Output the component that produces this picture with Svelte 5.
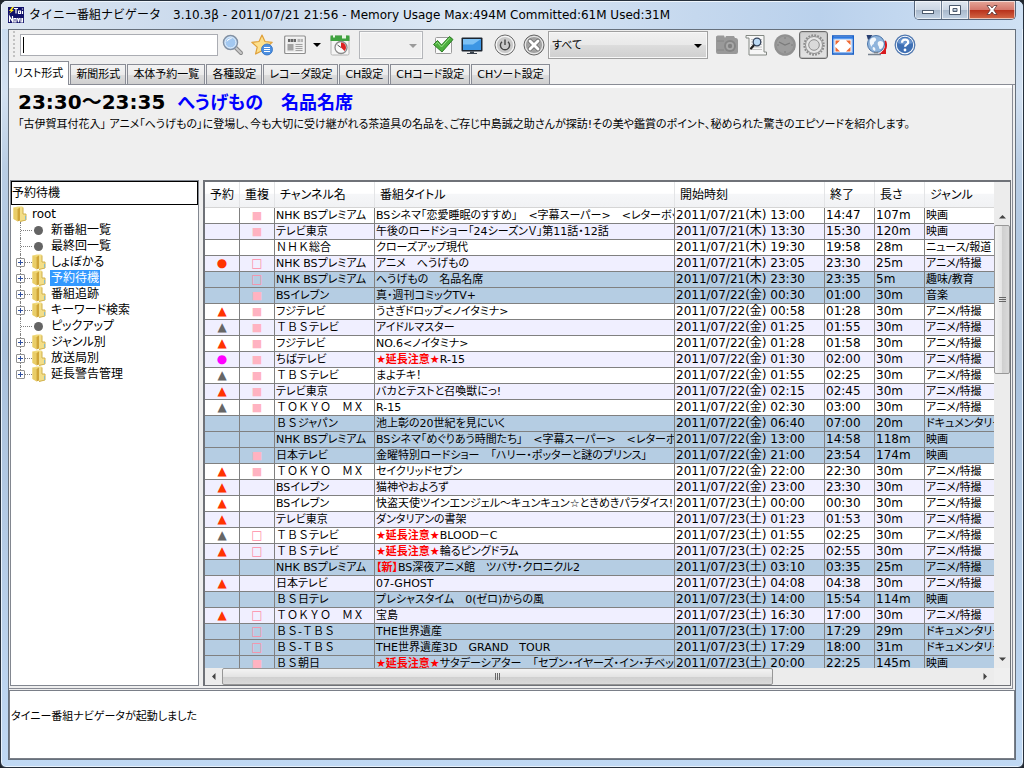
<script>
  let keyword = '';
  let genre = 'すべて';
  let activeTab = 'リスト形式';
  let selectedNode = '予約待機';

  const tabs = [
    'リスト形式',
    '新聞形式',
    '本体予約一覧',
    '各種設定',
    'レコーダ設定',
    'CH設定',
    'CHコード設定',
    'CHソート設定'
  ];

  const tree = [
    { label: '新番組一覧', leaf: true },
    { label: '最終回一覧', leaf: true },
    { label: 'しょぼかる' },
    { label: '予約待機' },
    { label: '番組追跡' },
    { label: 'キーワード検索' },
    { label: 'ピックアップ', leaf: true },
    { label: 'ジャンル別' },
    { label: '放送局別' },
    { label: '延長警告管理' }
  ];

  const columns = ['予約', '重複', 'チャンネル名', '番組タイトル', '開始時刻', '終了', '長さ', 'ジャンル'];

  const marks = {
    o: ['●', 'red'],
    m: ['●', 'magenta'],
    r: ['▲', 'red'],
    g: ['▲', 'gray']
  };

  const WARN = '★延長注意★';

  // mark, overlap, channel, flag, title, start, end, length, genre, passed
  const programs = [
    ['', '■', 'NHK BSプレミアム', '', 'BSシネマ「恋愛睡眠のすすめ」　<字幕スーパー>　<レターボックス', '2011/07/21(木) 13:00', '14:47', '107m', '映画', 0],
    ['', '■', 'テレビ東京', '', '午後のロードショー「24シーズンＶ」第11話・12話', '2011/07/21(木) 13:30', '15:30', '120m', '映画', 0],
    ['', '', 'ＮＨＫ総合', '', 'クローズアップ現代', '2011/07/21(木) 19:30', '19:58', '28m', 'ニュース/報道', 0],
    ['o', '□', 'NHK BSプレミアム', '', 'アニメ　へうげもの', '2011/07/21(木) 23:05', '23:30', '25m', 'アニメ/特撮', 0],
    ['', '□', 'NHK BSプレミアム', '', 'へうげもの　名品名席', '2011/07/21(木) 23:30', '23:35', '5m', '趣味/教育', 1],
    ['', '■', 'BSイレブン', '', '真・週刊コミックTV+', '2011/07/22(金) 00:30', '01:00', '30m', '音楽', 1],
    ['r', '■', 'フジテレビ', '', 'うさぎドロップ<ノイタミナ>', '2011/07/22(金) 00:58', '01:28', '30m', 'アニメ/特撮', 0],
    ['g', '■', 'ＴＢＳテレビ', '', 'アイドルマスター', '2011/07/22(金) 01:25', '01:55', '30m', 'アニメ/特撮', 0],
    ['r', '■', 'フジテレビ', '', 'NO.6<ノイタミナ>', '2011/07/22(金) 01:28', '01:58', '30m', 'アニメ/特撮', 0],
    ['m', '■', 'ちばテレビ', WARN, 'R-15', '2011/07/22(金) 01:30', '02:00', '30m', 'アニメ/特撮', 0],
    ['g', '■', 'ＴＢＳテレビ', '', 'まよチキ！', '2011/07/22(金) 01:55', '02:25', '30m', 'アニメ/特撮', 0],
    ['r', '■', 'テレビ東京', '', 'バカとテストと召喚獣にっ!', '2011/07/22(金) 02:15', '02:45', '30m', 'アニメ/特撮', 0],
    ['g', '■', 'ＴＯＫＹＯ　ＭＸ', '', 'R-15', '2011/07/22(金) 02:30', '03:00', '30m', 'アニメ/特撮', 0],
    ['', '', 'ＢＳジャパン', '', '池上彰の20世紀を見にいく', '2011/07/22(金) 06:40', '07:00', '20m', 'ドキュメンタリー', 1],
    ['', '', 'NHK BSプレミアム', '', 'BSシネマ「めぐりあう時間たち」　<字幕スーパー>　<レターボックス', '2011/07/22(金) 13:00', '14:58', '118m', '映画', 1],
    ['', '■', '日本テレビ', '', '金曜特別ロードショー　「ハリー・ポッターと謎のプリンス」', '2011/07/22(金) 21:00', '23:54', '174m', '映画', 1],
    ['r', '■', 'ＴＯＫＹＯ　ＭＸ', '', 'セイクリッドセブン', '2011/07/22(金) 22:00', '22:30', '30m', 'アニメ/特撮', 0],
    ['r', '', 'BSイレブン', '', '猫神やおよろず', '2011/07/22(金) 23:00', '23:30', '30m', 'アニメ/特撮', 0],
    ['r', '', 'BSイレブン', '', '快盗天使ツインエンジェル～キュンキュン☆ときめきパラダイス!!～', '2011/07/23(土) 00:00', '00:30', '30m', 'アニメ/特撮', 0],
    ['r', '', 'テレビ東京', '', 'ダンタリアンの書架', '2011/07/23(土) 01:23', '01:53', '30m', 'アニメ/特撮', 0],
    ['g', '□', 'ＴＢＳテレビ', WARN, 'BLOOD－C', '2011/07/23(土) 01:55', '02:25', '30m', 'アニメ/特撮', 0],
    ['r', '□', 'ＴＢＳテレビ', WARN, '輪るピングドラム', '2011/07/23(土) 02:25', '02:55', '30m', 'アニメ/特撮', 0],
    ['', '', 'NHK BSプレミアム', '【新】', 'BS深夜アニメ館　ツバサ・クロニクル2', '2011/07/23(土) 03:10', '03:35', '25m', 'アニメ/特撮', 1],
    ['r', '', '日本テレビ', '', '07-GHOST', '2011/07/23(土) 04:08', '04:38', '30m', 'アニメ/特撮', 0],
    ['', '', 'ＢＳ日テレ', '', 'プレシャスタイム　0(ゼロ)からの風', '2011/07/23(土) 14:00', '15:54', '114m', '映画', 1],
    ['r', '□', 'ＴＯＫＹＯ　ＭＸ', '', '宝島', '2011/07/23(土) 16:30', '17:00', '30m', 'アニメ/特撮', 0],
    ['', '□', 'ＢＳ-ＴＢＳ', '', 'THE世界遺産', '2011/07/23(土) 17:00', '17:29', '29m', 'ドキュメンタリー', 1],
    ['', '□', 'ＢＳ-ＴＢＳ', '', 'THE世界遺産3D　GRAND　TOUR', '2011/07/23(土) 17:29', '18:00', '31m', 'ドキュメンタリー', 1],
    ['', '■', 'ＢＳ朝日', WARN, 'サタデーシアター　「セブン・イヤーズ・イン・チベット', '2011/07/23(土) 20:00', '22:25', '145m', '映画', 1]
  ];

  // Full-width letters keep their own advance, the kana after them is set tighter
  function splitChannel(name) {
    const m = name.match(/^([Ａ-Ｚ　-]*)(.*)$/);
    return [m[1], m[2]];
  }
</script>

{#snippet folder()}
  <svg class="folder" viewBox="0 0 14 16" aria-hidden="true">
    <path d="M.5 1.500L5 .5h4.500v14H5L.5 13z" fill="#f0d978" />
    <path d="M.5 1.500L4.500 3v12.500L.5 13z" fill="#e9cd68" />
    <path d="M4.500 3L7 1.500v13l-2.500 1z" fill="#cfa537" />
    <path d="M7 1h3v7h3v6l-6 1.500z" fill="#f3de88" />
    <path d="M10 1.500V8h3v6l-6 1.500" fill="none" stroke="#d0b04a" />
    <path d="M12.500 10v3.500" stroke="#7dbbd4" stroke-width=".9" />
  </svg>
{/snippet}

<div class="window">
  <header class="title-bar">
    <svg class="app-icon" viewBox="0 0 16 16" aria-hidden="true">
      <rect width="16" height="16" fill="#10106a" />
      <path d="M4 0L1 4h2L1 7l5-4H4l2-3z" fill="#ffe81a" />
      <path d="M6 1.500h4M8 1.500v5M10.500 4h2v2.500h-2zM14.500 4v3M14.500 1.500v1" stroke="#fff" stroke-width="1.200" fill="none" />
      <path d="M1.500 15V9.500l3 5V9M6 11.500h2V15H6zM9.500 11l1 4 1-4M13 11v4h1.500v-4" stroke="#fff" stroke-width="1.200" fill="none" />
    </svg>
    <h1>タイニー番組ナビゲータ　3.10.3β - 2011/07/21 21:56 - Memory Usage Max:494M Committed:61M Used:31M</h1>
    <div class="window-controls">
      <button aria-label="最小化">
        <svg viewBox="0 0 14 12"><rect x="1.500" y="6.500" width="11" height="3" fill="#fff" stroke="#4c5a6d" /></svg>
      </button>
      <button aria-label="最大化">
        <svg viewBox="0 0 14 12"><path d="M1.500 1.500h11v9h-11zM5 4.500v3h4v-3z" fill="#fff" fill-rule="evenodd" stroke="#4c5a6d" /></svg>
      </button>
      <button class="close" aria-label="閉じる">
        <svg viewBox="0 0 14 12"><path d="M2 1.500h3L7 4l2-2.500h3L8.800 6l3.200 4.500H9L7 8l-2 2.500H2L5.200 6z" fill="#fff" stroke="#5b3434" stroke-width=".8" /></svg>
      </button>
    </div>
  </header>

  <div class="client">
    <div class="toolbar">
      <span class="grip"></span>
      <div class="search-box">
        <span class="caret"></span>
        <input type="text" aria-label="キーワード" bind:value={keyword} />
      </div>
      <button class="tool" aria-label="検索">
        <svg viewBox="0 0 22 22">
          <path d="M13 13l6 6" stroke="#8a8a8a" stroke-width="4" stroke-linecap="round" />
          <path d="M13 13l6 6" stroke="#c9c9c9" stroke-width="2" stroke-linecap="round" />
          <circle cx="8.500" cy="8.500" r="7" fill="#a3c8f0" stroke="#8391a3" stroke-width="1.500" />
          <circle cx="8.500" cy="8.500" r="5.500" fill="none" stroke="#e8f2fc" />
          <path d="M4.500 8a4.500 4.500 0 0 1 6-3.500C8 5 6 6 4.500 8z" fill="#fff" />
        </svg>
      </button>
      <button class="tool" aria-label="キーワードに追加">
        <svg viewBox="0 0 22 22">
          <path d="M11 1l3 6.500 7.200.8-5.400 4.800L17.400 20 11 16.800 4.600 20l1.600-6.900L.8 8.300 8 7.500z" fill="#fde08c" stroke="#dfa03a" stroke-width="1.200" stroke-linejoin="round" />
          <circle cx="16" cy="15.500" r="5.500" fill="#4c8fe0" stroke="#2f6fc2" stroke-width=".8" />
          <path d="M13 13.500h6M13 15.500h6M13 17.500h6" stroke="#fff" stroke-width="1.100" />
        </svg>
      </button>
      <button class="tool spaced" aria-label="表示形式">
        <svg viewBox="0 0 22 22">
          <rect x=".7" y="2" width="20.600" height="17.500" rx="1" fill="#fbfbfb" stroke="#8d8d8d" stroke-width="1.200" />
          <rect x="2.500" y="3.500" width="17" height="14.500" fill="#ececec" />
          <path d="M4 6.500h8" stroke="#666" stroke-width="3" stroke-dasharray="2.500 .5" />
          <path d="M13.500 6.500h5.500" stroke="#b4b4b4" stroke-width="3" stroke-dasharray="2.500 .5" />
          <rect x="3.500" y="10" width="6" height="6.500" fill="#a3a3a3" />
          <path d="M11.500 10.500h7M11.500 12.500h7M11.500 14.500h7M11.500 16.500h7" stroke="#999" stroke-width=".9" />
        </svg>
      </button>
      <button class="drop" aria-label="表示形式を選ぶ">
        <svg viewBox="0 0 8 4"><path d="M0 0h8L4 4z" fill="#000" /></svg>
      </button>
      <button class="tool" aria-label="日付指定">
        <svg viewBox="0 0 22 22">
          <rect x="2" y="2" width="18" height="19" rx="1.500" fill="#f5f5f5" stroke="#b4b4b4" />
          <path d="M1.500 1.500h19V7h-19z" fill="#3fa23f" />
          <path d="M13 .5h4v4h-4zM4 .5h2v3H4z" fill="#e8f5e4" />
          <circle cx="12" cy="13.500" r="6" fill="#fafafa" stroke="#8b8b8b" stroke-width="1.300" />
          <path d="M12 13.500V8.500A5 5 0 0 1 15.500 17z" fill="#dc2222" />
          <path d="M12 13.500L8.500 11" stroke="#555" />
        </svg>
      </button>
      <label class="combo small">
        <select aria-label="日付" disabled><option></option></select>
      </label>
      <button class="tool" aria-label="実行">
        <svg viewBox="0 0 22 22">
          <rect x="3.500" y="3.500" width="16" height="16" rx="1" fill="#fafafa" stroke="#9b9b9b" />
          <path d="M1.500 10.500l4-4 4 4.500L17.500 2.500 21 5.500 10 18z" fill="#4caf3d" stroke="#2b7c23" />
          <path d="M3.500 10l2-1.500 4 4.500 8-9" fill="none" stroke="#9be28c" />
        </svg>
      </button>
      <button class="tool" aria-label="画面">
        <svg viewBox="0 0 22 22">
          <rect x=".5" y="3.500" width="21" height="14" rx="1" fill="#1c2530" />
          <rect x="2" y="5" width="18" height="11" fill="#3c96e4" />
          <path d="M2 5h18l-8 5.500H2z" fill="#7cc1f5" />
          <path d="M9 17.500h4V19h3v1H6v-1h3z" fill="#39424d" />
        </svg>
      </button>
      <button class="tool spaced" aria-label="電源">
        <svg viewBox="0 0 22 22">
          <circle cx="11" cy="11" r="10" fill="#c9c9c9" stroke="#6b6b6b" />
          <circle cx="11" cy="11" r="8.700" fill="none" stroke="#f5f5f5" stroke-width="1.200" />
          <path d="M8 7.700a4.600 4.600 0 1 0 6 0M11 5.500v5.500" fill="none" stroke="#444" stroke-width="1.400" />
        </svg>
      </button>
      <button class="tool" aria-label="中止">
        <svg viewBox="0 0 22 22">
          <circle cx="11" cy="11" r="10" fill="#a2a2a2" stroke="#666" />
          <circle cx="11" cy="11" r="8.700" fill="none" stroke="#e6e6e6" stroke-width="1.200" />
          <path d="M7 7l8 8M15 7l-8 8" stroke="#666" stroke-width="4.500" stroke-linecap="round" />
          <path d="M7 7l8 8M15 7l-8 8" stroke="#fff" stroke-width="3" stroke-linecap="round" />
        </svg>
      </button>
      <label class="combo">
        <select aria-label="ジャンル" bind:value={genre}>
          <option>すべて</option>
          <option>アニメ/特撮</option>
          <option>映画</option>
        </select>
      </label>
      <button class="tool spaced" aria-label="スナップショット">
        <svg viewBox="0 0 22 22">
          <path d="M2 1.500h6L9 4l1-2h8l1 2a2.500 2.500 0 0 1 3 2v12a2 2 0 0 1-2 2H2a2 2 0 0 1-2-2V4a2 2 0 0 1 2-2.500z" fill="#999" />
          <path d="M1 7h7M1 16h7" stroke="#868686" />
          <circle cx="14" cy="12" r="6" fill="#858585" />
          <circle cx="14" cy="12" r="4" fill="#a8a8a8" />
          <circle cx="14" cy="12" r="2.200" fill="#808080" />
        </svg>
      </button>
      <button class="tool" aria-label="ログ">
        <svg viewBox="0 0 22 22">
          <path d="M1 1.500h18V18h2.500v3H4V4H1z" fill="#f7f7f7" stroke="#838883" />
          <path d="M6 5.500h11M6 8h11M6 10.500h11M6 13h11M6 15.500h11" stroke="#c4c4c4" />
          <path d="M9.500 10.500L6 14.500" stroke="#222" stroke-width="2.200" stroke-linecap="round" />
          <circle cx="12" cy="8" r="3.800" fill="#bcdaf5" stroke="#35445c" stroke-width="1.300" />
        </svg>
      </button>
      <button class="tool" aria-label="タイマー">
        <svg viewBox="0 0 22 22">
          <circle cx="11" cy="11" r="10.800" fill="#919191" />
          <circle cx="11" cy="11" r="8.500" fill="#9d9d9d" />
          <path d="M5 8l6 3 5-2" fill="none" stroke="#7a7a7a" stroke-width="1.300" />
          <path d="M11 3v2M11 17v2M3 11h2M17 11h2" stroke="#7f7f7f" />
        </svg>
      </button>
      <button class="tool pressed" aria-label="設定">
        <svg viewBox="0 0 22 22">
          <circle cx="11" cy="11" r="9.700" fill="none" stroke="#8c8c8c" stroke-width="2" stroke-dasharray="1.800 1.247" />
          <circle cx="11" cy="11" r="8.500" fill="#e6e6e6" stroke="#8f8f8f" />
          <circle cx="11" cy="11" r="5.300" fill="#dadada" stroke="#8f8f8f" />
        </svg>
      </button>
      <button class="tool" aria-label="全画面">
        <svg viewBox="0 0 22 22">
          <rect x=".8" y="2" width="20.400" height="18" fill="#fff" stroke="#1c62c8" stroke-width="1.600" />
          <path d="M1 3h20v2H1z" fill="#2d7be4" />
          <rect x="2" y="5" width="18" height="13.500" fill="none" stroke="#8db9f2" />
          <path d="M3.500 6.500h4.500l-4.500 4.500zM18.500 6.500H14l4.500 4.500zM3.500 17.500h4.500L3.500 13zM18.500 17.500H14l4.500-4.500z" fill="#ee6a35" />
        </svg>
      </button>
      <button class="tool spaced" aria-label="番組情報取得">
        <svg viewBox="0 0 22 22">
          <path d="M20 7c2.500 5 0 10-3 12" fill="none" stroke="#d81a1f" stroke-width="2" />
          <path d="M14 20h7v-5z" fill="#d81a1f" />
          <circle cx="11" cy="10" r="8.500" fill="#8fb4dc" stroke="#4b74a8" />
          <path d="M5 6c2-3 5-3 6-1s-2 2-2 4-2 1-2 3-3-2-2-6zM13 8c2-2 5-1 5.500 1s-1 6-3 6-1-2-2-3-1-3-.5-4zM8 13c2 0 3 2 2 4-2-1-3-2-2-4z" fill="#f2f7fc" />
          <path d="M1.500 1h6L5.500 3.500 3 6z" fill="#283f70" />
          <path d="M9 18.500h4M3 20.500h13" stroke="#77828f" stroke-width="1.500" />
        </svg>
      </button>
      <button class="tool" aria-label="ヘルプ">
        <svg viewBox="0 0 22 22">
          <circle cx="11" cy="11" r="9.800" fill="#fff" stroke="#5078b0" stroke-width="1.300" />
          <circle cx="11" cy="11" r="8.200" fill="#3e6fb4" />
          <path d="M3.500 9a8 8 0 0 1 15 0c-5 2-10 2-15 0z" fill="#6b96cf" />
          <path d="M8 8.700c0-4 6.200-4 6.200-.5 0 2.300-3.100 2.200-3.100 4.600" fill="none" stroke="#fff" stroke-width="2.200" />
          <circle cx="11" cy="16" r="1.400" fill="#fff" />
        </svg>
      </button>
    </div>

    <nav class="tabs">
      {#each tabs as tab}
        <button class="tab" class:active={tab === activeTab} on:click={() => (activeTab = tab)}>{tab}</button>
      {/each}
    </nav>

    <main class="pane">
      <section class="detail">
        <h2>23:30～23:35 <span>へうげもの　名品名席</span></h2>
        <p>「古伊賀耳付花入」 アニメ「へうげもの」に登場し、今も大切に受け継がれる茶道具の名品を、ご存じ中島誠之助さんが探訪!その美や鑑賞のポイント、秘められた驚きのエピソードを紹介します。</p>
      </section>

      <div class="split">
        <aside>
          <div class="caption">{selectedNode}</div>
          <div class="tree">
            <div class="root">{@render folder()}<span>root</span></div>
            <ul>
              {#each tree as node}
                <li class:leaf={node.leaf}>
                  {#if node.leaf}
                    <span class="branch"></span>
                    <span class="dot"></span>
                  {:else}
                    <button class="toggle" aria-label="{node.label}を開く">
                      <svg viewBox="0 0 7 7"><path d="M1 3.500h5M3.500 1v5" stroke="#2f4f9f" /></svg>
                    </button>
                    <span class="branch"></span>
                    {@render folder()}
                  {/if}
                  <button class="node" class:selected={node.label === selectedNode} on:click={() => (selectedNode = node.label)}>{node.label}</button>
                </li>
              {/each}
            </ul>
          </div>
        </aside>

        <section class="list">
          <div class="table-view">
            <table>
              <colgroup>
                <col class="w-mark" /><col class="w-mark" /><col class="w-channel" /><col class="w-title" />
                <col class="w-start" /><col class="w-time" /><col class="w-time" /><col />
              </colgroup>
              <thead>
                <tr>
                  {#each columns as column}
                    <th>{column}</th>
                  {/each}
                </tr>
              </thead>
              <tbody>
                {#each programs as [mark, overlap, channel, flag, title, start, end, length, kind, passed]}
                  <tr class:passed>
                    <td class="mark {mark ? marks[mark][1] : ''}">{mark ? marks[mark][0] : ''}</td>
                    <td class="mark pink" class:hollow={overlap === '□'}>{overlap}</td>
                    <td class="name"><span class="full">{splitChannel(channel)[0]}</span>{splitChannel(channel)[1]}</td>
                    <td class="name">{#if flag}<b>{flag}</b>{/if}{title}</td>
                    <td>{start}</td>
                    <td>{end}</td>
                    <td>{length}</td>
                    <td class="name">{kind}</td>
                  </tr>
                {/each}
              </tbody>
            </table>
          </div>
          <div class="scroll vertical">
            <svg class="arrow" viewBox="0 0 7 7"><path d="M0 5.500h7L3.500 2z" fill="#444" /></svg>
            <div class="track"><div class="thumb"><i></i><i></i><i></i></div></div>
            <svg class="arrow" viewBox="0 0 7 7"><path d="M0 1.500h7L3.500 5z" fill="#444" /></svg>
          </div>
          <div class="scroll horizontal">
            <svg class="arrow" viewBox="0 0 7 7"><path d="M5.500 0v7L2 3.500z" fill="#444" /></svg>
            <div class="track"><div class="thumb"><i></i><i></i><i></i></div></div>
            <svg class="arrow" viewBox="0 0 7 7"><path d="M1.500 0v7L5 3.500z" fill="#444" /></svg>
          </div>
        </section>
      </div>
    </main>

    <footer class="log">タイニー番組ナビゲータが起動しました</footer>
  </div>
</div>

<style>
  :global(body) {
    margin: 0;
    background: #20262e;
  }

  .window {
    display: flex;
    flex-direction: column;
    box-sizing: border-box;
    height: 100vh;
    min-height: 480px;
    padding: 0 7px 7px;
    border: 1px solid #26303c;
    border-radius: 7px 7px 6px 6px;
    overflow: hidden;
    background: linear-gradient(#c8dbf0, #d3e1f1 12%, #b9cde4 22%, #a9c1dc 45%, #b4cbe5 70%, #c0d9f4);
    box-shadow: inset 0 0 0 1px #e8f2fc;
    color: #000;
    font-family: "DejaVu Sans", "Noto Sans CJK JP", sans-serif;
    font-size: 12px;
    font-feature-settings: "palt";
    cursor: default;
  }

  button, input, select {
    margin: 0;
    padding: 0;
    border: 0;
    background: none;
    color: inherit;
    font: inherit;
    font-feature-settings: inherit;
  }

  h1, h2, p, ul {
    margin: 0;
    padding: 0;
  }

  svg {
    display: block;
  }

  /* title bar */
  .title-bar {
    display: flex;
    align-items: center;
    flex: none;
    height: 28px;
    margin: 0 -7px;
    padding: 0 7px;
    background: linear-gradient(90deg, #dde7f2, #c9d9ec 20%, #dbe7f4 45%, #c5d8ee 68%, #bad1ec 80%, #cfe1f4);
    box-shadow: inset 1px 1px 0 #eef5fc;
  }

  .app-icon {
    flex: none;
    width: 16px;
    height: 16px;
  }

  .title-bar h1 {
    flex: 1;
    min-width: 0;
    margin-left: 5px;
    overflow: hidden;
    white-space: nowrap;
    font-size: 12px;
    font-weight: normal;
    font-feature-settings: normal;
    line-height: 28px;
  }

  .window-controls {
    display: flex;
    align-self: flex-start;
    border: 1px solid #55657a;
    border-top: 0;
    border-radius: 0 0 5px 5px;
    overflow: hidden;
  }

  .window-controls button {
    display: flex;
    align-items: center;
    justify-content: center;
    width: 27px;
    height: 18px;
    border-right: 1px solid #6d7d92;
    background: linear-gradient(#dfe7f0, #cbd6e3 50%, #a9b9cc 52%, #c3d3e5);
    box-shadow: inset 0 0 0 1px rgba(255, 255, 255, 0.6);
  }

  .window-controls button.close {
    width: 46px;
    border-right: 0;
    background: linear-gradient(#e5a799, #d4766a 50%, #b8321c 52%, #d46a48);
  }

  .window-controls svg {
    width: 14px;
    height: 12px;
  }

  .client {
    display: flex;
    flex: 1;
    flex-direction: column;
    min-height: 0;
    border: 1px solid #66707c;
    background: #efefef;
  }

  /* toolbar */
  .toolbar {
    display: flex;
    align-items: center;
    flex: none;
    height: 30px;
    padding-left: 4px;
  }

  .grip {
    width: 2px;
    height: 28px;
    margin-right: 5px;
    background: repeating-linear-gradient(#c2c2c2 0 2px, transparent 2px 4px);
  }

  .search-box {
    display: flex;
    align-items: center;
    box-sizing: border-box;
    width: 198px;
    height: 22px;
    padding: 0 2px;
    border: 1px solid #abadb3;
    background: #fff;
  }

  .search-box input {
    flex: 1;
    min-width: 0;
    outline: 0;
  }

  .caret {
    width: 1px;
    height: 16px;
    background: #000;
  }

  .tool {
    display: flex;
    align-items: center;
    justify-content: center;
    flex: none;
    box-sizing: border-box;
    width: 29px;
    height: 28px;
  }

  .tool svg {
    width: 22px;
    height: 22px;
  }

  .tool.spaced {
    margin-left: 4px;
  }

  .tool.pressed {
    border: 1px solid #6b6b6b;
    border-radius: 3px;
    background: linear-gradient(#cfcfcf, #e3e3e3);
    box-shadow: inset 0 0 0 1px #bdbdbd;
  }

  .drop {
    display: flex;
    align-items: center;
    justify-content: center;
    width: 16px;
    height: 28px;
  }

  .drop svg {
    width: 8px;
    height: 4px;
  }

  .combo {
    position: relative;
    box-sizing: border-box;
    width: 160px;
    height: 28px;
    border: 1px solid #a0a0a0;
    background: linear-gradient(#f1f1f1, #e9e9e9 50%, #dcdcdc 52%, #cfcfcf);
    box-shadow: inset 0 0 0 1px #f8f8f8;
  }

  .combo.small {
    width: 64px;
    margin: 0 5px;
    border-color: #b4b6ba;
    background: #efefef;
  }

  .combo select {
    width: 100%;
    height: 100%;
    padding-left: 3px;
    appearance: none;
    font-size: 11px;
  }

  .combo::after {
    content: "";
    position: absolute;
    top: 12px;
    right: 5px;
    border: 4px solid transparent;
    border-top-color: #000;
    border-bottom: 0;
    pointer-events: none;
  }

  .combo.small::after {
    border-top-color: #9a9a9a;
  }

  /* tabs */
  .tabs {
    display: flex;
    align-items: flex-end;
    flex: none;
    height: 24px;
    border-bottom: 1px solid #898c95;
  }

  .tab {
    height: 20px;
    margin-left: 1px;
    padding: 0 5px;
    border: 1px solid #898c95;
    border-bottom: 0;
    background: linear-gradient(#f3f3f3, #ebebeb 50%, #dddddd 52%, #cfcfcf);
    font-size: 11px;
    line-height: 19px;
    white-space: nowrap;
  }

  .tab.active {
    height: 24px;
    margin: 0 0 -1px;
    border-left: 0;
    background: #fff;
  }

  /* main pane */
  .pane {
    display: flex;
    flex: 1;
    flex-direction: column;
    min-height: 0;
    margin-right: 2px;
    padding: 3px 0 2px 1px;
    border-right: 1px solid #898c95;
    border-bottom: 1px solid #898c95;
    background: linear-gradient(#fff 3px, #efefef 3px);
  }

  .detail {
    flex: none;
    height: 92px;
    padding: 0 8px;
  }

  .detail h2 {
    font-size: 20px;
    line-height: 28px;
    white-space: nowrap;
  }

  .detail h2 span {
    margin-left: 5px;
    color: #0000ff;
    font-size: 18px;
  }

  .detail p {
    font-size: 11px;
    line-height: 16px;
  }

  .split {
    display: flex;
    flex: 1;
    gap: 4px;
    min-height: 0;
  }

  aside {
    display: flex;
    flex: none;
    flex-direction: column;
    box-sizing: border-box;
    width: 189px;
    border: 1px solid #828790;
    background: #fff;
  }

  .caption {
    height: 22px;
    border: 1px solid #000;
    line-height: 22px;
  }

  .tree {
    padding: 1px 2px;
    line-height: 16px;
  }

  .folder {
    flex: none;
    width: 14px;
    height: 16px;
  }

  .root {
    display: flex;
    gap: 5px;
  }

  .tree li {
    position: relative;
    display: flex;
    align-items: center;
    height: 16px;
    padding-left: 3px;
  }

  .tree li::before {
    content: "";
    position: absolute;
    top: 0;
    left: 7px;
    height: 100%;
    border-left: 1px dotted #808080;
  }

  .tree li:last-child::before {
    height: 50%;
  }

  .toggle {
    position: relative;
    width: 9px;
    height: 9px;
    border: 1px solid #919191;
    border-radius: 1px;
    background: #fff;
    box-sizing: border-box;
  }

  .toggle svg {
    width: 7px;
    height: 7px;
  }

  .branch {
    width: 7px;
    border-top: 1px dotted #808080;
  }

  .leaf .branch {
    width: 11px;
    margin-left: 5px;
  }

  .dot {
    width: 9px;
    height: 9px;
    margin-right: 3px;
    margin-left: 2px;
    border-radius: 50%;
    background: #646464;
  }

  .node {
    height: 16px;
    margin-left: 4px;
    padding: 0 1px;
    line-height: 16px;
    white-space: nowrap;
  }

  .node.selected {
    background: #3399ff;
    color: #fff;
  }

  /* program table */
  .list {
    display: grid;
    flex: 1;
    grid-template-columns: 1fr 16px;
    grid-template-rows: 1fr 17px;
    min-width: 0;
    margin-right: 1px;
    border: 1px solid #6f7278;
    border-width: 2px 1px 1px 2px;
  }

  .table-view {
    min-width: 0;
    min-height: 0;
    overflow: hidden;
    background: #fff;
  }

  table {
    width: 100%;
    border-spacing: 0;
    table-layout: fixed;
  }

  .w-mark {
    width: 35px;
  }

  .w-channel {
    width: 100px;
  }

  .w-title {
    width: 300px;
  }

  .w-start {
    width: 150px;
  }

  .w-time {
    width: 50px;
  }

  th, td {
    overflow: hidden;
    padding: 0 0 0 1px;
    text-align: left;
    white-space: nowrap;
    font-weight: normal;
  }

  th {
    height: 23px;
    padding: 2px 0 0 5px;
    border-right: 1px solid #e3e4e6;
    border-bottom: 1px solid #d5d5d5;
    background: linear-gradient(#fff 45%, #f5f6f8 50%, #f1f2f4);
    line-height: 23px;
  }

  td {
    height: 15px;
    border-right: 1px solid #808080;
    border-bottom: 1px solid #808080;
    line-height: 15px;
  }

  th:last-child, td:last-child {
    border-right: 0;
  }

  tbody tr:nth-child(even) {
    background: #f0efff;
  }

  tbody tr.passed {
    background: #b5cde3;
  }

  td.name {
    font-size: 11px;
  }

  td b {
    color: #ff0000;
  }

  .full {
    font-feature-settings: normal;
  }

  .mark {
    padding: 0;
    text-align: center;
  }

  .red {
    color: #ff3300;
  }

  .magenta {
    color: #ff00ff;
  }

  .gray {
    color: #666;
  }

  .pink {
    color: #ffb3c1;
    font-size: 11px;
  }

  .pink.hollow {
    color: #ff8ca4;
    font-size: 12px;
  }

  /* scroll bars */
  .scroll {
    display: flex;
    align-items: center;
    background: #ececec;
  }

  .vertical {
    flex-direction: column;
    padding-top: 26px;
  }

  .horizontal {
    grid-column: 1;
  }

  .arrow {
    flex: none;
    width: 7px;
    height: 7px;
    padding: 5px;
  }

  .track {
    display: flex;
    flex: 1;
    align-self: stretch;
  }

  .vertical .track {
    flex-direction: column;
  }

  .thumb {
    display: flex;
    align-items: center;
    justify-content: center;
    gap: 1px;
    box-sizing: border-box;
    border: 1px solid #979797;
    border-radius: 2px;
  }

  .vertical .thumb {
    flex-direction: column;
    height: 35%;
    background: linear-gradient(90deg, #f3f3f3, #e4e4e4 50%, #cfcfcf 52%, #dadada);
  }

  .horizontal .thumb {
    width: 73%;
    background: linear-gradient(#f3f3f3, #e4e4e4 50%, #cfcfcf 52%, #dadada);
  }

  .thumb i {
    background: #666;
  }

  .vertical .thumb i {
    width: 7px;
    height: 1px;
  }

  .horizontal .thumb i {
    width: 1px;
    height: 7px;
  }

  .log {
    flex: none;
    box-sizing: border-box;
    height: 69px;
    margin-top: 1px;
    padding: 18px 1px;
    border: 1px solid #7a7f88;
    background: #fff;
    font-size: 11px;
    line-height: 16px;
  }
</style>
